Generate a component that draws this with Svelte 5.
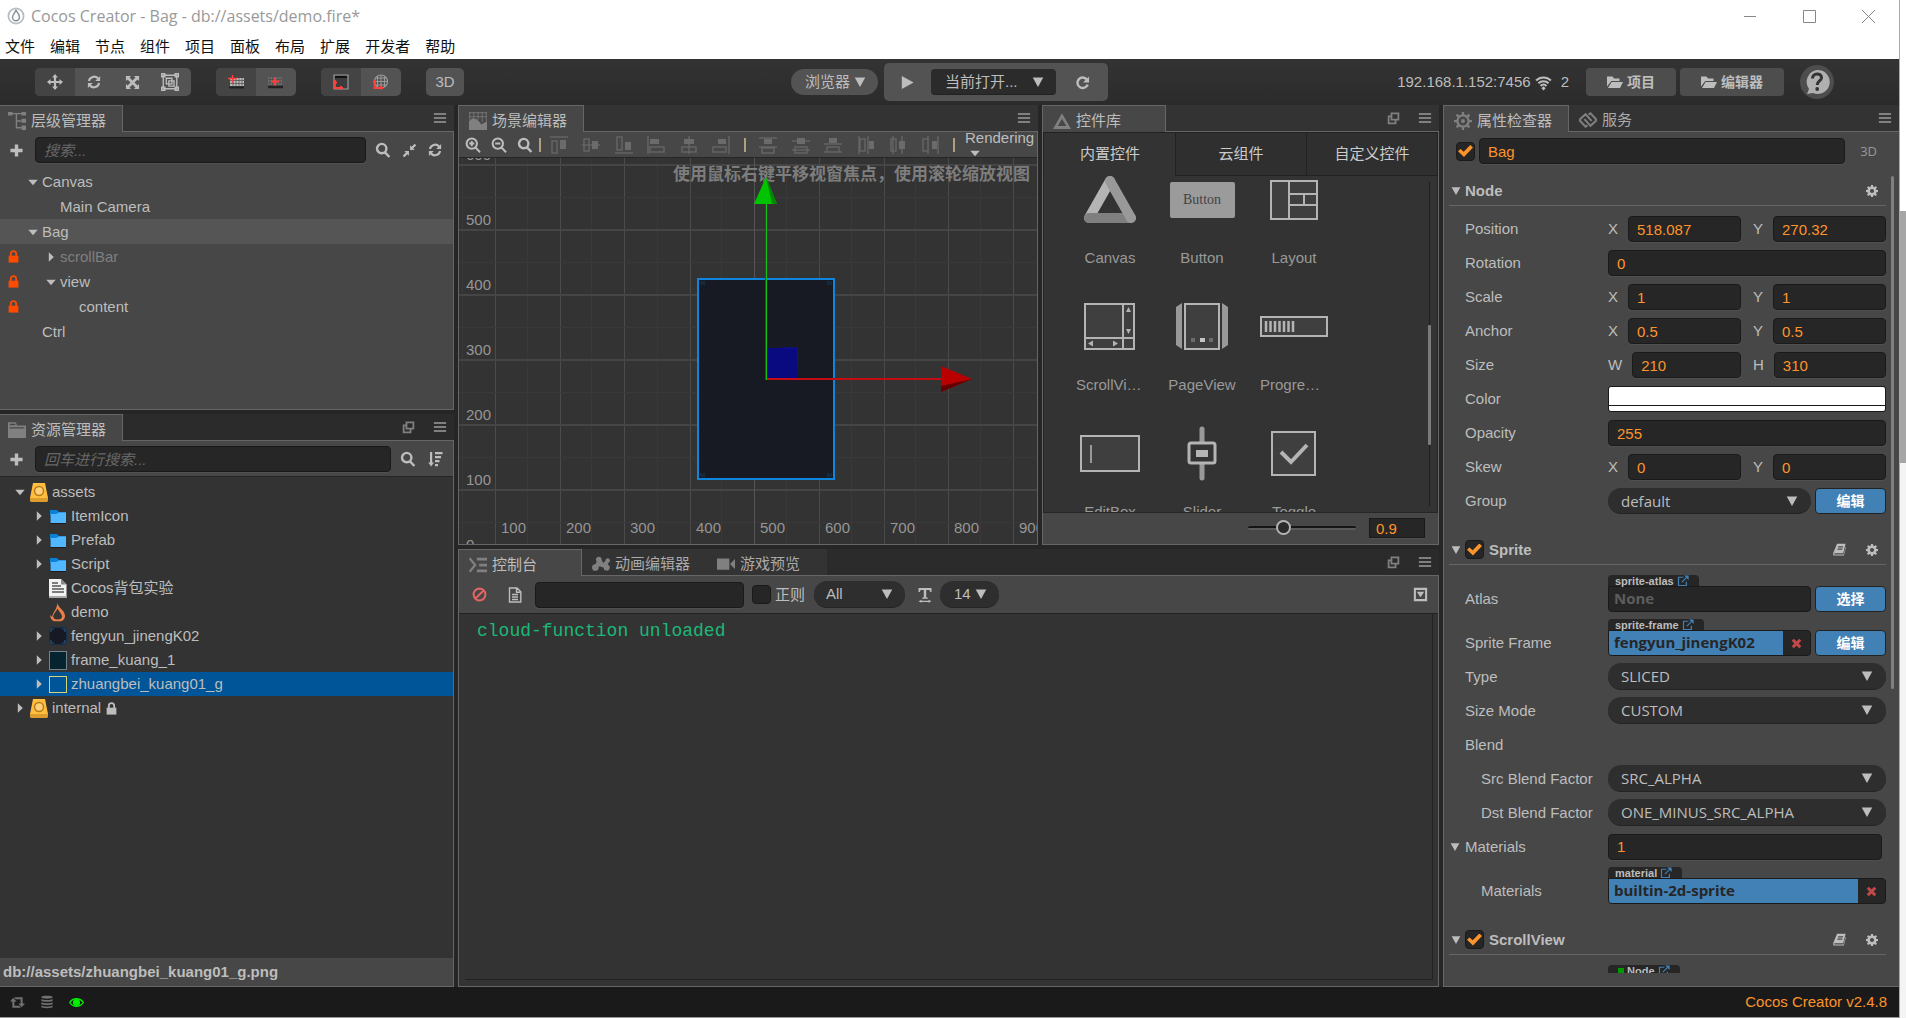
<script>
  // 16x16 glyphs: f = filled path, s = stroked path, w = stroke width
  const glyphs = {
    move: { f: 'M8 0l3 3.5H9.1v3.4h3.4V5L16 8l-3.5 3V9.1H9.1v3.4H11L8 16l-3-3.5h1.9V9.1H3.5V11L0 8l3.5-3v1.9h3.4V3.5H5z' },
    sync: { f: 'M15 1.2v5.6H9.4zM1 14.8V9.2h5.6z', s: 'M2.2 6.8A6 6 0 0 1 12.6 4M13.8 9.2A6 6 0 0 1 3.4 12', w: 2.4 },
    expand: { f: 'M1 1h5.5L4.8 2.7 8 5.9l3.2-3.2L9.5 1H15v5.5l-1.700-1.7L10.1 8l3.2 3.2L15 9.5V15H9.5l1.7-1.7L8 10.1l-3.2 3.2L6.5 15H1V9.5l1.7 1.7L5.900 8 2.7 4.8 1 6.5z' },
    rect: { s: 'M2 2h12v12H2zM4.7 4.7h5v5h-5zM7 7h4.6v4.6H7zM.6.6h2.8v2.8H.6zM12.6.6h2.8v2.8h-2.8zM.6 12.6h2.8v2.8H.6zM12.6 12.6h2.8v2.8h-2.8z', w: 1.2 },
    plus: { f: 'M6.2 1.500h3.6v4.7h4.7v3.6H9.8v4.7H6.2V9.8H1.5V6.2h4.7z' },
    search: { s: 'M11.4 6.6a4.7 4.7 0 1 1-9.4 0 4.7 4.7 0 0 1 9.4 0zM10 10.4l4.4 4.6', w: 2.4 },
    zoomin: { s: 'M12 6.6a5.2 5.2 0 1 1-10.4 0 5.2 5.2 0 0 1 10.4 0zM10.400 10.400l4.600 4.800M4.200 6.600H9.400M6.800 4v5.200', w: 2 },
    zoomout: { s: 'M12 6.6a5.2 5.2 0 1 1-10.4 0 5.2 5.2 0 0 1 10.4 0zM10.400 10.400l4.600 4.800M4.200 6.600H9.400', w: 2 },
    compress: { f: 'M8.6 7.4V2.5l1.6 1.6L13.6.8l1.6 1.6-3.3 3.4 1.6 1.6zM7.4 8.6v4.9l-1.6-1.6-3.4 3.3-1.6-1.6 3.3-3.4-1.6-1.6z' },
    sort: { f: 'M3 1h2.2v10.5H7l-2.9 4-2.9-4H3zM8 1h7.5v2.2H8zM8 5h6v2.2H8zM8 9h4.5v2.2H8zM8 13h3v2.2H8z' },
    menu: { f: 'M1 2.2h14v2.4H1zM1 6.8h14v2.4H1zM1 11.4h14v2.4H1z' },
    popup: { s: 'M5.5 1.8H14v7.5H5.5zM5.5 5.5H2V14h8.5V9.5', w: 2.2 },
    lock: { f: 'M2 7h12v8.500H2z', s: 'M4.700 8V4.6a3.300 3.300 0 0 1 6.600 0V8', w: 2.2 },
    down: { f: 'M.5 4.500h15L8 13z' },
    right: { f: 'M4.500.5v15l8-7.500z' },
    triangle: { f: 'M1 2h14L8 14.5z' },
    play: { f: 'M1 0l14.500 8L1 16z' },
    reload: { f: 'M15 1.5V8H8.5z', s: 'M12.6 4.8a5.6 5.6 0 1 0 .9 5.4', w: 2.6 },
    wifi: { f: 'M8 11.500l2 2L8 15.5l-2-2z', s: 'M1 6.2a10 10 0 0 1 14 0M3.200 8.800a6.800 6.800 0 0 1 9.600 0M5.2 11.200a4 4 0 0 1 5.600 0', w: 2 },
    folder: { f: 'M0 12.5V2.5h5.5l1.5 2h5.5V7H4.3zM1 14l3.6-6H16l-3 6z' },
    gear: { f: 'M6.7 0h2.600l.4 2.200 1.400.600L13 1.500 14.700 3.300 13.300 5.100l.6 1.400L16 6.800v2.500l-2.100.4-.6 1.400 1.300 1.800-1.800 1.800-1.800-1.300-1.400.6L9.300 16H6.700l-.4-2-1.400-.6-1.800 1.300-1.800-1.800 1.300-1.800L2.100 9.700 0 9.300V6.800l2.100-.4.6-1.300L1.300 3.300l1.800-1.800 1.800 1.300 1.400-.6zM8 5.300a2.700 2.700 0 1 0 0 5.400 2.700 2.700 0 0 0 0-5.400z' },
    geartab: { f: 'M8 6.3a1.7 1.7 0 1 0 0 3.4 1.7 1.7 0 0 0 0-3.4z', s: 'M13 8A5 5 0 1 1 3 8a5 5 0 0 1 10 0zM8 0v3M8 13v3M0 8h3M13 8h3M2.3 2.3l2 2M11.7 11.7l2 2M2.3 13.7l2-2M11.7 4.3l2-2', w: 2 },
    book: { f: 'M5 1h10.5L12.5 12.5H2.2C1 12.5 1 14 2.3 14H13l2.5-9.5.5.5-2.6 10.5H2C.3 15.5-.2 14 .4 12zM6.500 4l-.4 1.400h6L12.500 4zM5.700 6.800l-.4 1.400h6l.4-1.400z' },
    external: { s: 'M8.5 3H2v11h10.5V9M6.5 9.5L13.5 2.5', w: 1.6, f: 'M9.5.5h6v6z' },
    cross: { f: 'M1 4l3-3 4 3.8L12 1l3 3-3.800 4L15 12l-3 3-4-3.8L4 15l-3-3 3.8-4z' },
    ban: { s: 'M14.3 8A6.3 6.3 0 1 1 1.7 8a6.3 6.3 0 0 1 12.6 0zM12.3 3.7l-8.6 8.6', w: 2.2 },
    doc: { s: 'M2.5 1H10l3.8 3.8V15H2.5zM9.5 1v4.3h4M5 7.5h6M5 10h6M5 12.5h6', w: 1.400 },
    font: { f: 'M1.5 1h13v4h-1.3l-.8-2H9.2v7.3l1.6.5v1H5.2v-1l1.6-.5V3H3.6l-.8 2H1.5zM4.5 12.8v.9h7v-.9l3 1.5-3 1.5v-.9h-7v.9l-3-1.5z' },
    collapse: { s: 'M2 2h12v12H2z', f: 'M4 5h8l-4 6z', w: 2.2 },
    retweet: { f: 'M3.5 3L7 7H4.7v4.5H10l1.5 2h-9V7H0zM12.5 13L9 9h2.300V4.500H6l-1.500-2h9V9H16z' },
    database: { f: 'M1.5 2.5c0-2.200 13-2.200 13 0s-13 2.200-13 0zM1.5 4.600c2 1.600 11 1.600 13 0v1.600c0 2.200-13 2.200-13 0zM1.500 8.300c2 1.600 11 1.600 13 0v1.600c0 2.200-13 2.200-13 0zM1.500 12c2 1.600 11 1.600 13 0v1.400c0 2.200-13 2.200-13 0z' },
    eye: { s: 'M.8 8C4 2.6 12 2.6 15.2 8 12 13.4 4 13.4.8 8z', f: 'M8 4.2a3.8 3.8 0 1 0 0 7.6 3.8 3.8 0 0 0 0-7.6z', w: 1.5 },
    tree: { f: 'M0 0h4v3H0zM12 0h4v3h-4zM12 6h4v3.5h-4zM12 12h4v4h-4z', s: 'M3 1.5h10M7.5 1.5V14H12M7.5 8H12', w: 1.2 },
    scene: { f: 'M0 16V8l3-2.5L6 6l3 2.5 2 2.500 2-1 3-2v8z', s: 'M0 .7h16M0 4.2h16M.7 0v7M4.3 0v5M8 0v7M11.7 0v9M15.3 0v8', w: 0.7 },
    assets: { f: 'M0 1h7l1 3h8v11H0zM1.5 5.5v1.2h13V5.5zM1.5 2.5v1.3h5V2.5z' },
    console: { f: 'M7 1.5h9V4H7zM9 6.8h7v2.5H9zM7 12h9v2.5H7z', s: 'M.5 2l5 6-5 6', w: 2 },
    anim: { f: 'M6 1.500a2.500 2.500 0 0 1 2.500 2.800L10 7l2-1.800a2 2 0 1 1 2.500 1.600l-.3 1.800A2.800 2.800 0 1 1 10.200 11L7 10.300l-1.200.2A2.900 2.900 0 1 1 3 8.200l1.200-2.400A2.500 2.500 0 0 1 6 1.500z' },
    video: { f: 'M0 3h11v10H0zM12 7.5l4-4v9l-4-4z' },
    canvas: { f: 'M8 1l8 14H0zM8 6l-3.8 6.5h7.6z' },
    service: { s: 'M7.500 12.800L5.800 14 .9 8.700a1 1 0 0 1 0-1.400L5.800 2.800l5.400 6M8.500 3.200L10.200 2l4.900 5.300a1 1 0 0 1 0 1.400l-4.900 4.500-5.400-6', w: 1.8 },
  };

  // scene alignment glyphs on a 20x18 grid: o = outlines, b = solid blocks
  const aligns = [
    { o: 'M1 1h18M3 5h5v12H3z', b: 'M11 4h6v9h-6z' },
    { o: 'M1 9h18M3 3h5v12H3z', b: 'M11 5h6v8h-6z' },
    { o: 'M1 17h18M3 1h5v13H3z', b: 'M11 6h6v8h-6z' },
    { o: 'M2 0v18M4 11h14v5H4z', b: 'M4 3h9v5H4z' },
    { o: 'M10 0v18M3 11h14v5H3z', b: 'M5 3h10v5H5z' },
    { o: 'M18 0v18M2 11h13v5H2z', b: 'M7 3h8v5H7z' },
    null,
    { o: 'M1 2h18M1 11h18M4 12h12v5H4z', b: 'M6 3h8v5H6z' },
    { o: 'M1 5h18M1 14h18M4 11h12v6H4z', b: 'M6 2h8v6H6z' },
    { o: 'M1 8h18M1 16h18M4 11h12v5H4z', b: 'M6 2h8v5H6z' },
    { o: 'M3 0v18M4 3h5v12H4zM12 0v18', b: 'M13 5h5v8h-5z' },
    { o: 'M5 0v18M3 3h5v12H3zM14 0v18', b: 'M11 5h6v8h-6z' },
    { o: 'M8 0v18M3 3h5v12H3zM18 0v18', b: 'M12 5h5v8h-5z' },
    null,
  ];

  const menus = ['文件', '编辑', '节点', '组件', '项目', '面板', '布局', '扩展', '开发者', '帮助'];
  const nodes = [
    { name: 'Canvas', depth: 0, arrow: 'down' },
    { name: 'Main Camera', depth: 1 },
    { name: 'Bag', depth: 0, arrow: 'down', active: true },
    { name: 'scrollBar', depth: 1, arrow: 'right', lock: true, dim: true },
    { name: 'view', depth: 1, arrow: 'down', lock: true },
    { name: 'content', depth: 2, lock: true },
    { name: 'Ctrl', depth: 0 },
  ];
  const files = [
    { name: 'assets', depth: 0, arrow: 'down', kind: 'db' },
    { name: 'ItemIcon', depth: 1, arrow: 'right', kind: 'folder' },
    { name: 'Prefab', depth: 1, arrow: 'right', kind: 'folder' },
    { name: 'Script', depth: 1, arrow: 'right', kind: 'folder' },
    { name: 'Cocos背包实验', depth: 1, kind: 'text' },
    { name: 'demo', depth: 1, kind: 'fire' },
    { name: 'fengyun_jinengK02', depth: 1, arrow: 'right', kind: 'tex1' },
    { name: 'frame_kuang_1', depth: 1, arrow: 'right', kind: 'tex2' },
    { name: 'zhuangbei_kuang01_g', depth: 1, arrow: 'right', kind: 'tex3', active: true },
    { name: 'internal', depth: 0, arrow: 'right', kind: 'db', lock: true },
  ];
  const widgets = [
    { kind: 'Canvas', label: 'Canvas' },
    { kind: 'Button', label: 'Button' },
    { kind: 'Layout', label: 'Layout' },
    { kind: 'ScrollView', label: 'ScrollVi…', cut: true },
    { kind: 'PageView', label: 'PageView' },
    { kind: 'ProgressBar', label: 'Progre…', cut: true },
    { kind: 'EditBox', label: 'EditBox' },
    { kind: 'Slider', label: 'Slider' },
    { kind: 'Toggle', label: 'Toggle' },
  ];
  const vlines = [36, 101, 165, 231, 295, 360, 425, 489, 554];
  const hlines = [7, 72, 137, 202, 267, 332];
</script>

{#snippet icon(name, size = 16)}
  <svg width={size} height={size} viewBox="0 0 16 16" aria-hidden="true">
    {#if glyphs[name].f}<path d={glyphs[name].f} fill="currentColor" fill-rule="evenodd" />{/if}
    {#if glyphs[name].s}<path d={glyphs[name].s} fill="none" stroke="currentColor" stroke-width={glyphs[name].w} />{/if}
  </svg>
{/snippet}

{#snippet tab(ic, label, active)}
  <button class="tab" class:active role="tab" aria-selected={active}>{@render icon(ic, 18)}<span>{label}</span></button>
{/snippet}

{#snippet panelTools(popup)}
  <div class="panel-tools">
    {#if popup}<button aria-label="弹出">{@render icon('popup', 13)}</button>{/if}
    <button aria-label="菜单">{@render icon('menu', 14)}</button>
  </div>
{/snippet}

{#snippet dropdown(value, label)}
  <div class="drop">
    <select aria-label={label}><option>{value}</option></select>
    {@render icon('triangle', 12)}
  </div>
{/snippet}

{#snippet pair(label, a, av, b, bv)}
  <div class="prop">
    <span class="name">{label}</span>
    <div class="value pair">
      <label>{a}<input value={av} /></label>
      <label>{b}<input value={bv} /></label>
    </div>
  </div>
{/snippet}

{#snippet single(label, value)}
  <label class="prop"><span class="name">{label}</span><input class="value" {value} /></label>
{/snippet}

{#snippet choose(label, value, sub)}
  <div class="prop"><span class="name" class:sub>{label}</span><div class="value">{@render dropdown(value, label)}</div></div>
{/snippet}

{#snippet header(title)}
  <div class="sec-head">
    {@render icon('triangle', 10)}
    <label><input type="checkbox" checked /><b>{title}</b></label>
    <div class="sec-tools">
      <button aria-label="文档">{@render icon('book', 13)}</button>
      <button aria-label="设置">{@render icon('gear', 12)}</button>
    </div>
  </div>
{/snippet}

<div class="window">
  <header class="titlebar">
    <svg width="18" height="18" viewBox="0 0 18 18" aria-hidden="true">
      <circle cx="9" cy="9" r="7.6" fill="#fff" stroke="#b9bdc4" stroke-width="1.8" />
      <path d="M9 2.5c.5 3 3.5 4.5 3.5 7.8a3.5 3.5 0 0 1-7 0C5.5 7.5 8.5 6 9 2.5z" fill="#fff" stroke="#868b92" stroke-width="1.4" />
    </svg>
    <h1>Cocos Creator - Bag - db://assets/demo.fire*</h1>
    <div class="win-ctl">
      <button aria-label="最小化"><svg width="13" height="13"><path d="M0 6.5h12" /></svg></button>
      <button aria-label="最大化"><svg width="13" height="13"><path d="M.5.5h12v12H.5z" /></svg></button>
      <button aria-label="关闭"><svg width="13" height="13"><path d="M0 0l13 13M13 0L0 13" /></svg></button>
    </div>
  </header>
  <nav class="menubar">{#each menus as m}<button>{m}</button>{/each}</nav>

  <div class="toolbar">
    <div class="tb-left">
      <div class="seg">
        <button class="on" aria-label="移动">{@render icon('move', 16)}</button>
        <button aria-label="旋转">{@render icon('sync', 14)}</button>
        <button aria-label="缩放">{@render icon('expand', 15)}</button>
        <button aria-label="矩形">{@render icon('rect', 18)}</button>
      </div>
      <div class="seg">
        <button class="on" aria-label="锚点"><svg width="16" height="16" viewBox="0 0 16 16"><path d="M2 4h14v8H2z" fill="#bbb" /><path d="M5 4v8M8 4v8M11 4v8M14 4v8M2 6.5h14M2 9.5h14" stroke="#4b4b4b" stroke-width=".7" /><path d="M1 13.500h15" stroke="#222" stroke-width="2" /><path d="M0 4.5h9M4.500 1v8" stroke="#ff4040" stroke-width="1.4" /></svg></button>
        <button aria-label="中心"><svg width="16" height="16" viewBox="0 0 16 16"><path d="M1 4h15M1 7h15M1 10h15" stroke="#888" stroke-width="1.200" stroke-dasharray="1.500 1" /><path d="M1 13h15" stroke="#222" stroke-width="2.500" /><path d="M4 7.500h8M8 3.500v8" stroke="#ff4040" stroke-width="1.800" /></svg></button>
      </div>
      <div class="seg">
        <button class="on" aria-label="本地"><svg width="16" height="16" viewBox="0 0 16 16"><path d="M1 1h14v14H1z" fill="#3c3c3c" stroke="#999" stroke-width="1.2" /><path d="M2 2h12v2H2z" fill="#111" /><path d="M2 6v8h8M1 8.500h3M8 12v3.500" stroke="#ff4040" stroke-width="1.800" fill="none" /></svg></button>
        <button aria-label="世界"><svg width="16" height="16" viewBox="0 0 16 16"><circle cx="9" cy="7.5" r="6.5" fill="none" stroke="#999" stroke-width="1.2" /><path d="M9 1v13M5.5 2v11M12.5 2v11M2.5 7.500h13M3.500 4h11M3.500 11h11" stroke="#999" /><path d="M2.500 6v8H11M1 8h3M9 11.500v4" stroke="#ff4040" stroke-width="1.800" fill="none" /></svg></button>
      </div>
      <button class="btn3d">3D</button>
    </div>
    <div class="tb-mid">
      <div class="browser"><select aria-label="预览平台"><option>浏览器</option></select>{@render icon('triangle', 12)}</div>
      <div class="playbox">
        <button class="run" aria-label="运行">{@render icon('play', 13)}</button>
        <div class="scene-select"><select aria-label="场景"><option>当前打开...</option></select>{@render icon('triangle', 12)}</div>
        <button aria-label="刷新">{@render icon('reload', 15)}</button>
      </div>
    </div>
    <div class="tb-right">
      <span class="ip">192.168.1.152:7456</span>{@render icon('wifi', 17)}<span class="count">2</span>
      <button class="open">{@render icon('folder', 16)}项目</button>
      <button class="open">{@render icon('folder', 16)}编辑器</button>
      <button class="help" aria-label="帮助">
        <svg width="34" height="34" viewBox="0 0 34 34"><circle cx="17" cy="17" r="17" fill="#4d4d4d" /><path d="M17 5a12 12 0 1 1-4 23l-6 1 2-5A12 12 0 0 1 17 5z" fill="#b0b0b0" /><path d="M12.5 13.5c0-6 9-6 9-.8 0 3.3-4.3 3.3-4.3 7.3" fill="none" stroke="#333" stroke-width="3" /><circle cx="17.2" cy="24" r="1.9" fill="#333" /></svg>
      </button>
    </div>
  </div>

  <main>
    <div class="col left">
      <section class="panel hierarchy">
        <div class="tabs">{@render tab('tree', '层级管理器', true)}{@render panelTools(false)}</div>
        <div class="body">
          <div class="searchbar">
            <button aria-label="新建">{@render icon('plus', 15)}</button>
            <input placeholder="搜索..." aria-label="搜索节点" />
            <button aria-label="搜索">{@render icon('search', 16)}</button>
            <button aria-label="折叠">{@render icon('compress', 15)}</button>
            <button aria-label="刷新">{@render icon('sync', 14)}</button>
          </div>
          <ul class="nodes">
            {#each nodes as n}
              <li class:active={n.active} class:dim={n.dim} class="d{n.depth}">
                <span class="lock">{#if n.lock}{@render icon('lock', 13)}{/if}</span>
                <span class="arrow">{#if n.arrow}{@render icon(n.arrow, 10)}{/if}</span>
                <span>{n.name}</span>
              </li>
            {/each}
          </ul>
        </div>
      </section>

      <section class="panel assets">
        <div class="tabs">{@render tab('assets', '资源管理器', true)}{@render panelTools(true)}</div>
        <div class="body">
          <div class="searchbar two">
            <button aria-label="新建">{@render icon('plus', 15)}</button>
            <input placeholder="回车进行搜索..." aria-label="搜索资源" />
            <button aria-label="搜索">{@render icon('search', 16)}</button>
            <button aria-label="排序">{@render icon('sort', 16)}</button>
          </div>
          <ul class="files">
            {#each files as f}
              <li class:active={f.active} class="d{f.depth}">
                <span class="arrow">{#if f.arrow}{@render icon(f.arrow, 10)}{/if}</span>
                <svg width="18" height="20" viewBox="0 0 18 20" aria-hidden="true">
                  {#if f.kind === 'db'}
                    <path d="M3 1h12l3 15v2l-1 2H1l-1-2v-2z" fill="#ffbe3d" /><path d="M0 16h18v2l-1 2H1l-1-2z" fill="#dc9c2e" /><circle cx="9" cy="9" r="4.5" fill="#ffd27a" stroke="#b97a1c" stroke-width="1.5" />
                  {:else if f.kind === 'folder'}
                    <path d="M1 4h7l2 2h7v12H1z" fill="#1c1c1c" /><path d="M1 4h7l2 2h7v3H1z" fill="#0b81d6" /><path d="M1.5 8h6l2-1.5H17V17H1.5z" fill="#51b7ff" />
                  {:else if f.kind === 'text'}
                    <path d="M0 1h12l5.5 5.5V20H0z" fill="#f2f2f2" /><path d="M12 1l5.5 5.5H12z" fill="#888" /><path d="M3 5h6M3 8h9M3 11h12M3 14h12" stroke="#555" stroke-width="1.4" /><path d="M0 18h17.5v2H0z" fill="#aaa" />
                  {:else if f.kind === 'fire'}
                    <path d="M8.5 1C9 6 16 8 16 14c0 3-2.5 5.2-4 5.2H5.5C3.5 19 1 16.5 1.2 13L3 15C4.5 9 7.5 8 8.5 1z" fill="#e8804a" /><path d="M8.5 6.500c1 3 4.500 5 4.500 8 0 1.700-1.500 3-4.500 3s-4.200-1.300-4.200-3c0-3 3.200-5 4.200-8z" fill="#333" />
                  {:else if f.kind === 'tex1'}
                    <rect x=".5" y="1.5" width="17" height="17" rx="3" fill="#171a24" stroke="#11304a" /><path d="M2 6V3h3M13 3h3v3M2 14v3h3M13 17h3v-3" fill="none" stroke="#2a5578" stroke-width="1.2" />
                  {:else if f.kind === 'tex2'}
                    <rect x=".5" y="1.5" width="17" height="18" fill="#052430" stroke="#72838c" />
                  {:else}
                    <rect x=".5" y="2.5" width="17" height="16" fill="none" stroke="#d5d27a" />
                  {/if}
                </svg>
                <span>{f.name}</span>
                {#if f.lock}{@render icon('lock', 13)}{/if}
              </li>
            {/each}
          </ul>
          <div class="path">db://assets/zhuangbei_kuang01_g.png</div>
        </div>
      </section>
    </div>

    <div class="col mid">
      <div class="midtop">
        <section class="panel scene">
          <div class="tabs">{@render tab('scene', '场景编辑器', true)}{@render panelTools(false)}</div>
          <div class="body">
            <div class="scene-tools">
              <button aria-label="放大">{@render icon('zoomin', 16)}</button>
              <button aria-label="缩小">{@render icon('zoomout', 16)}</button>
              <button aria-label="适应">{@render icon('search', 16)}</button>
              <i class="bar"></i>
              <div class="aligns">
                {#each aligns as a}
                  {#if a}
                    <button aria-label="对齐"><svg width="20" height="18" viewBox="0 0 20 18"><path d={a.o} fill="none" stroke="#646464" stroke-width="1.5" /><path d={a.b} fill="#6b6b6b" /></svg></button>
                  {:else}<i class="bar"></i>{/if}
                {/each}
              </div>
              <button class="rendering"><span>Rendering</span>{@render icon('down', 10)}</button>
            </div>
            <svg class="canvas" role="img" aria-label="场景">
              {#each vlines as x}
                <rect {x} y="0" width="1" height="100%" fill="#4b4b4b" /><rect x={x - 33} y="0" width="1" height="100%" fill="#393939" />
              {/each}
              {#each hlines as y}
                <rect x="0" y={y - 1} width="100%" height="2" fill="#454545" /><rect x="0" y={y + 32} width="100%" height="1" fill="#393939" />
              {/each}
              <rect x="295" y="0" width="1" height="100%" fill="#555" />
              <text class="tip" x="571" y="22" text-anchor="end">使用鼠标右键平移视窗焦点，使用滚轮缩放视图</text>
              <text x="7" y="2">600</text>
              {#each [500, 400, 300, 200, 100, 0] as v, i}<text x="7" y={67 + i * 65}>{v}</text>{/each}
              {#each vlines as x, i}<text x={x + 6} y="375">{(i + 1) * 100}</text>{/each}
              <rect x="239" y="121" width="136" height="200" fill="#171a22" stroke="#0f86dd" stroke-width="2" />
              <path d="M242 127v-3h4M372 127v-3h-4M242 315v3h4M372 315v3h-4M244 126h2M370 126h-2M244 316h2M370 316h-2" fill="none" stroke="#163a58" stroke-width="1" />
              <rect x="308" y="190" width="31" height="31" fill="#0a0a80" />
              <path d="M323 190h15.5v18" fill="none" stroke="#0d0dab" stroke-width="1" />
              <rect x="306" y="45" width="1" height="177" fill="#12600f" /><rect x="307" y="45" width="1" height="177" fill="#13c413" />
              <path d="M307 19l11 27h-23z" fill="#00c400" /><path d="M307 19l11 27h-5z" fill="#008800" />
              <rect x="308" y="220" width="174" height="2" fill="#c40d12" />
              <path d="M482 208l31 13-31 13z" fill="#b80000" /><path d="M482 228l31-7-31 13z" fill="#650000" />
            </svg>
          </div>
        </section>

        <section class="panel library">
          <div class="tabs">{@render tab('canvas', '控件库', true)}{@render panelTools(true)}</div>
          <div class="body">
            <div class="subtabs" role="tablist">
              <button role="tab" aria-selected="true">内置控件</button>
              <button role="tab" aria-selected="false">云组件</button>
              <button role="tab" aria-selected="false">自定义控件</button>
            </div>
            <div class="lib-scroll">
              <div class="widgets">
                {#each widgets as w}
                  <figure>
                    {#if w.kind === 'Button'}
                      <div class="pic"><span class="fake-btn">Button</span></div>
                    {:else}
                      <svg class="pic" width="68" height="56" viewBox="0 0 68 56" fill="none" stroke="#b4b4b4" stroke-width="2" aria-hidden="true">
                        {#if w.kind === 'Canvas'}
                          <path d="M13 46L34 9" stroke-width="10" stroke-linecap="round" /><path d="M13 46h42" stroke="#7f7f7f" stroke-width="10" stroke-linecap="round" /><path d="M34 9l21 37" stroke="#999" stroke-width="10" stroke-linecap="round" />
                        {:else if w.kind === 'Layout'}
                          <path fill="#3f3f3f" d="M11 9h46v38H11zM29 9v38M29 22h28M29 33h28M44 22v11" />
                        {:else if w.kind === 'ScrollView'}
                          <path fill="#3f3f3f" d="M9 5h49v45H9zM47 5v45M9 39h49" /><path d="M50 13l2.500-5 2.500 5zM50 30l2.500 5 2.500-5zM17 41.500l-5 3 5 3zM37 41.500l5 3-5 3z" fill="#b4b4b4" stroke="none" />
                        {:else if w.kind === 'PageView'}
                          <path d="M8 8l6-4v46l-6-4zM60 8l-6-4v46l6-4z" fill="#999" stroke="none" /><path fill="#3f3f3f" d="M17 5h34v45H17z" /><path d="M23 39h4v4h-4zM41 39h4v4h-4z" fill="#6b6b6b" stroke="none" /><path d="M32 39h5v4h-5z" fill="#c4c4c4" stroke="none" />
                        {:else if w.kind === 'ProgressBar'}
                          <path fill="#3f3f3f" d="M1 18h66v19H1z" /><path d="M6 22v11M10.500 22v11M15 22v11M19.500 22v11M24 22v11M28.500 22v11M33 22v11" stroke-width="2.500" />
                        {:else if w.kind === 'EditBox'}
                          <path fill="#3f3f3f" d="M5 10h58v35H5z" /><path d="M15 19v18" stroke="#999" />
                        {:else if w.kind === 'Slider'}
                          <path d="M34 3v49" stroke="#999" stroke-width="5" stroke-linecap="round" /><rect x="21" y="17" width="26" height="20" rx="2" fill="#333" stroke-width="3" /><path d="M28 24h12v7H28z" fill="#b4b4b4" stroke="none" />
                        {:else}
                          <path fill="#3f3f3f" d="M12 6h43v43H12z" /><path d="M21 26l10 10L47 19" stroke-width="4" />
                        {/if}
                      </svg>
                    {/if}
                    <figcaption class:cut={w.cut}>{w.label}</figcaption>
                  </figure>
                {/each}
              </div>
              <div class="lib-bar"><i></i></div>
            </div>
            <div class="lib-foot">
              <input type="range" min="0" max="3" step="0.1" value="0.9" aria-label="图标大小" />
              <input class="num" value="0.9" aria-label="缩放值" />
            </div>
          </div>
        </section>
      </div>

      <section class="panel console">
        <div class="tabs">
          {@render tab('console', '控制台', true)}
          {@render tab('anim', '动画编辑器', false)}
          {@render tab('video', '游戏预览', false)}
          {@render panelTools(true)}
        </div>
        <div class="body">
          <div class="con-tools">
            <button class="ban" aria-label="清空">{@render icon('ban', 15)}</button>
            <button class="doc" aria-label="日志">{@render icon('doc', 16)}</button>
            <input class="filter" aria-label="过滤" />
            <label class="regex"><input type="checkbox" />正则</label>
            <div class="pill all"><select aria-label="级别"><option>All</option></select>{@render icon('triangle', 12)}</div>
            <span class="fonticon">{@render icon('font', 16)}</span>
            <div class="pill size"><select aria-label="字号"><option>14</option></select>{@render icon('triangle', 12)}</div>
            <button class="coll" aria-label="折叠">{@render icon('collapse', 15)}</button>
          </div>
          <div class="log"><p>cloud-function unloaded</p></div>
        </div>
      </section>
    </div>

    <section class="panel inspector">
      <div class="tabs">{@render tab('geartab', '属性检查器', true)}{@render tab('service', '服务', false)}{@render panelTools(false)}</div>
      <div class="body">
        <div class="node-name">
          <input type="checkbox" checked aria-label="启用" /><input value="Bag" aria-label="节点名" /><button>3D</button>
        </div>
        <div class="ins-scroll">
          <div class="sections">
            <div class="sec node-sec">
              <div class="sec-head">
                {@render icon('triangle', 10)}<b>Node</b>
                <div class="sec-tools"><button aria-label="设置">{@render icon('gear', 12)}</button></div>
              </div>
              <div class="props">
                {@render pair('Position', 'X', '518.087', 'Y', '270.32')}
                {@render single('Rotation', '0')}
                {@render pair('Scale', 'X', '1', 'Y', '1')}
                {@render pair('Anchor', 'X', '0.5', 'Y', '0.5')}
                {@render pair('Size', 'W', '210', 'H', '310')}
                <div class="prop"><span class="name">Color</span><button class="value color" aria-label="Color"></button></div>
                {@render single('Opacity', '255')}
                {@render pair('Skew', 'X', '0', 'Y', '0')}
                <div class="prop"><span class="name">Group</span><div class="value row">{@render dropdown('default', 'Group')}<button class="blue">编辑</button></div></div>
              </div>
            </div>
            <div class="sec">
              {@render header('Sprite')}
              <div class="props sprite">
                <div class="prop tall">
                  <span class="name">Atlas</span>
                  <div class="value row asset"><div class="slot"><span class="tag">sprite-atlas{@render icon('external', 12)}</span><div class="ref none">None</div></div><button class="blue">选择</button></div>
                </div>
                <div class="prop tall">
                  <span class="name">Sprite Frame</span>
                  <div class="value row asset"><div class="slot"><span class="tag">sprite-frame{@render icon('external', 12)}</span><div class="ref"><span>fengyun_jinengK02</span><button aria-label="移除">{@render icon('cross', 11)}</button></div></div><button class="blue">编辑</button></div>
                </div>
                {@render choose('Type', 'SLICED', false)}
                {@render choose('Size Mode', 'CUSTOM', false)}
                <div class="prop"><span class="name">Blend</span></div>
                {@render choose('Src Blend Factor', 'SRC_ALPHA', true)}
                {@render choose('Dst Blend Factor', 'ONE_MINUS_SRC_ALPHA', true)}
                <label class="prop mats"><span class="name">{@render icon('triangle', 10)}Materials</span><input class="value" value="1" /></label>
                <div class="prop tall">
                  <span class="name sub">Materials</span>
                  <div class="value row asset"><div class="slot"><span class="tag">material{@render icon('external', 12)}</span><div class="ref"><span>builtin-2d-sprite</span><button aria-label="移除">{@render icon('cross', 11)}</button></div></div></div>
                </div>
              </div>
            </div>
            <div class="sec">
              {@render header('ScrollView')}
              <div class="props sprite"><div class="prop tall"><span class="name"></span><div class="value row asset"><div class="slot"><span class="tag"><i class="dot"></i>Node{@render icon('external', 12)}</span><div class="ref none"></div></div></div></div></div>
            </div>
          </div>
          <div class="ins-bar"></div>
        </div>
      </div>
    </section>
  </main>

  <footer>
    {@render icon('retweet', 15)}{@render icon('database', 14)}<span class="eye">{@render icon('eye', 15)}</span>
    <span class="version">Cocos Creator v2.4.8</span>
  </footer>
</div>
<aside class="behind"></aside>

<style>
  :global(body) { background: #fff; }
  :global(#app) {
    display: flex; height: 100vh; overflow: hidden;
    font: 15px/18px "Liberation Sans", "Noto Sans CJK SC", sans-serif; color: #bdbdbd;
  }
  * { box-sizing: border-box; }
  button, input, select { font: inherit; color: inherit; margin: 0; padding: 0; border: 0; background: none; min-width: 0; }
  button { display: inline-flex; align-items: center; justify-content: center; }
  select { appearance: none; outline: 0; }
  svg { display: block; flex: none; }
  ul { list-style: none; margin: 0; padding: 0; }

  .window { flex: 1; min-width: 0; display: flex; flex-direction: column; background: #262626; border-bottom: 1px solid #999; }
  .behind { width: 7px; background: linear-gradient(#fff 0 211px, #a6a6a6 211px 463px, #f4f4f4 463px); border-left: 1px solid #aaa; }

  .titlebar { display: flex; align-items: center; height: 32px; padding-left: 7px; background: #fff; }
  h1 { margin: 0 0 0 6px; font: 16px/20px "Open Sans", sans-serif; color: #999; flex: 1; }
  .win-ctl { display: flex; gap: 46px; padding-right: 24px; }
  .win-ctl path { fill: none; stroke: #888; }
  .menubar { display: flex; gap: 15px; height: 27px; padding: 2px 5px 0; background: #fff; color: #111; }

  .toolbar { display: grid; grid-template-columns: 1fr auto 1fr; align-items: center; height: 46px; background: linear-gradient(#333, #2b2b2b); }
  .tb-left { display: flex; gap: 25px; padding-left: 35px; }
  .seg { display: flex; height: 28px; padding-right: 2px; border-radius: 5px; background: #535353; overflow: hidden; }
  .seg button { width: 38px; }
  .seg .on { width: 40px; background: #444; }
  .btn3d { width: 38px; border-radius: 5px; background: #535353; }
  .tb-mid { display: flex; align-items: center; gap: 6px; }
  .browser, .scene-select, .drop, .pill { display: grid; align-items: center; }
  .browser > :global(*), .scene-select > :global(*), .drop > :global(*), .pill > :global(*) { grid-area: 1 / 1; }
  .browser :global(svg), .scene-select :global(svg), .drop :global(svg), .pill :global(svg) { justify-self: end; pointer-events: none; }
  .browser { width: 87px; height: 26px; padding: 0 12px 0 14px; border-radius: 13px; background: #535353; }
  .playbox { display: flex; width: 224px; height: 38px; align-items: center; border-radius: 5px; background: #535353; }
  .playbox > button { flex: 1; height: 38px; }
  .playbox > .run { flex: 0 0 47px; }
  .scene-select { width: 125px; height: 26px; padding: 0 12px 0 14px; border-radius: 4px; background: #2b2b2b; border-bottom: 1px solid #222; }
  .tb-right { display: flex; align-items: center; justify-content: flex-end; padding-right: 65px; }
  .ip { margin-right: 4px; }
  .count { margin: 0 17px 0 9px; }
  .open { height: 28px; padding: 0 21px; gap: 4px; margin-right: 4px; border-radius: 4px; background: #4d4d4d; font-weight: bold; font-size: 14px; }
  .help { margin-left: 12px; }

  main { flex: 1; min-height: 0; display: grid; grid-template-columns: 454fr 981fr 456fr; gap: 4px; }
  .col { display: grid; gap: 4px; min-width: 0; min-height: 0; }
  .left { grid-template-rows: 305fr 573fr; }
  .mid { grid-template-rows: 440fr 438fr; }
  .midtop { display: grid; grid-template-columns: 580fr 397fr; gap: 4px; min-height: 0; }
  .panel { display: flex; flex-direction: column; min-width: 0; min-height: 0; }
  .body { flex: 1; min-height: 0; display: flex; flex-direction: column; background: #474747; border: 1px solid #666; border-top: 0; }
  .left .body { border-left: 0; }
  .inspector .body { border-right: 0; }
  .tabs { display: flex; height: 27px; background: #333; border-bottom: 1px solid #666; flex: none; }
  .console .tabs, .assets .tabs { background: #2b2b2b; }
  .tab { gap: 5px; height: 26px; padding: 3px 17px 0 10px; background: #333; color: #aaa; justify-content: flex-start; }
  .tab :global(svg) { color: #808080; }
  .tab.active { height: 27px; min-width: 124px; padding-right: 16px; background: #474747; color: #bdbdbd; border: 1px solid #666; border-bottom: 0; }
  .console .tab:last-of-type { padding-right: 27px; }
  .left .tab.active { border-left: 0; padding-left: 8px; min-width: 123px; }
  .panel-tools { margin-left: auto; display: flex; align-items: center; gap: 18px; padding-right: 7px; color: #808080; }

  input:not([type]) { height: 26px; padding: 0 8px; background: #262626; border: 1px solid #1a1a1a; border-radius: 4px; color: #fd942b; box-shadow: 0 1px #505050; outline: 0; }
  input::placeholder { color: #666; font-style: italic; }
  input[type='checkbox'] { appearance: none; width: 19px; height: 19px; background: #262626; border: 1px solid #1a1a1a; border-radius: 4px; display: grid; place-items: center; flex: none; }
  input[type='checkbox']:checked::before { content: ''; width: 15px; height: 12px; background: #fd942b; clip-path: polygon(0 52%, 17% 34%, 38% 57%, 82% 0, 100% 20%, 40% 100%); }

  .searchbar { display: flex; align-items: center; padding: 5px 11px 6px 9px; gap: 11px; }
  .searchbar input { flex: 1; }
  .searchbar input { margin-right: -2px; }
  .searchbar.two { padding: 5px 10px 4px 9px; border-bottom: 1px solid #262626; }
  li { display: flex; align-items: center; white-space: nowrap; }
  .arrow { width: 10px; }
  .nodes li { height: 25px; }
  .nodes .active { background: #555; }
  .nodes .lock { width: 28px; padding-left: 7px; color: #ff4b00; }
  .nodes .arrow { margin-right: 4px; }
  .nodes .d1 .arrow { margin-left: 18px; }
  .nodes .d2 .arrow { margin-left: 37px; }
  .nodes .dim span:last-child { color: #7f7f7f; }
  .files { flex: 1; padding-top: 3px; background: #333; }
  .files li { height: 24px; padding-left: 15px; gap: 4px; }
  .files .arrow { width: 11px; }
  .files li.d1 { padding-left: 34px; }
  .files .active { background: #059; }
  .path { height: 28px; padding: 5px 3px; font-weight: bold; }

  .scene-tools { display: flex; align-items: center; height: 26px; padding-left: 6px; border-bottom: 1px solid #262626; gap: 10px; }
  .bar { width: 2px; height: 14px; background: #b0a080; }
  .scene-tools > .bar { margin-left: -4px; }
  .aligns { flex: 1; display: flex; align-items: center; justify-content: space-between; margin-left: -2px; }
  .rendering { flex-direction: column; align-items: flex-start; justify-content: flex-start; gap: 4px; width: 72px; height: 26px; line-height: 12px; }
  .rendering :global(svg) { margin-left: 5px; }
  .canvas { flex: 1; width: 100%; min-height: 0; background: #333; }
  .canvas text { fill: #969696; font-size: 15px; }
  .canvas .tip { fill: #7d7d7d; font-size: 17px; font-weight: bold; }

  .subtabs { display: grid; grid-template-columns: repeat(3, 1fr); height: 44px; flex: none; background: #333; border: 1px solid #222; border-bottom: 0; }
  .subtabs button { background: #2f2f2f; border-left: 1px solid #222; border-bottom: 1px solid #222; color: #ccc; }
  .subtabs [aria-selected='true'] { background: #333; border-color: #333; }
  .lib-scroll { flex: 1; min-height: 0; overflow: hidden; display: flex; background: #333; border: 1px solid #262626; border-top: 0; padding: 0 6px 0 32px; }
  .widgets { flex: 1; display: grid; grid-template-columns: repeat(3, 68px); column-gap: 24px; align-content: start; grid-auto-rows: 127px; }
  figure { margin: 0; text-align: center; }
  .widgets .pic { height: 56px; margin: -4px 0 20px; }
  div.pic { display: grid; place-items: center; }
  .fake-btn { width: 65px; height: 36px; border-radius: 2px; background: #9b9b9b; color: #444; font: 14px/36px "Liberation Serif", serif; }
  figcaption { color: #999; line-height: 20px; white-space: nowrap; }
  .cut { text-align: left; }
  .lib-bar { width: 3px; margin: 6px 0; background: linear-gradient(90deg, transparent 1px, #1e1e1e 1px 2px, transparent 2px); padding-top: 143px; }
  .lib-bar i { display: block; height: 120px; background: #7b7b7b; border-radius: 1px; }
  .lib-foot { display: flex; justify-content: flex-end; align-items: center; height: 31px; padding: 0 13px 1px 0; gap: 13px; }
  .lib-foot .num { width: 56px; height: 20px; padding: 0 6px; border-radius: 0; }
  input[type='range'] { appearance: none; width: 108px; height: 16px; }
  input[type='range']::-webkit-slider-runnable-track { height: 4px; border-radius: 2px; background: linear-gradient(#151515 50%, #5a5a5a 50%); }
  input[type='range']::-webkit-slider-thumb { appearance: none; width: 15px; height: 15px; margin-top: -6px; border-radius: 50%; background: #2b2b2b; border: 2px solid #b5b5b5; }

  .con-tools { display: flex; align-items: center; height: 38px; padding: 0 10px 0 13px; border-bottom: 1px solid #222; flex: none; }
  .ban { color: #e06565; margin-right: 20px; }
  .doc { margin-right: 12px; }
  .con-tools input.filter { width: 209px; }
  .regex { display: flex; align-items: center; gap: 4px; margin: 0 9px 0 8px; }
  .pill, .drop { height: 27px; border-radius: 13px; background: #2e2e2e; border-bottom: 1px solid #242424; }
  .all { width: 91px; padding: 0 12px; }
  .fonticon { margin: 0 7px 0 12px; }
  .size { width: 59px; padding: 0 12px 0 14px; }
  .coll { margin-left: auto; }
  .log { flex: 1; margin: 0 5px 6px 6px; border-right: 1px solid #222; border-bottom: 1px solid #222; }
  .console .body { background: #333; }
  .console .con-tools { background: #474747; }
  .log p { margin: 7px 12px; font: 18px/20px "Liberation Mono", monospace; color: #1cb877; }

  .node-name { display: flex; align-items: center; gap: 4px; padding: 6px 22px 0 12px; }
  .node-name input:not([type]) { flex: 1; }
  .node-name button { margin-left: 11px; font: 13px/16px "Open Sans", sans-serif; color: #999; }
  .ins-scroll { flex: 1; min-height: 0; display: flex; margin: 12px 5px 13px 5px; gap: 5px; overflow: hidden; }
  .sections { flex: 1; min-width: 0; }
  .ins-bar { width: 3px; height: 513px; background: #808080; border-radius: 2px; }
  .sec-head { display: flex; align-items: center; height: 30px; border-bottom: 1px solid #666; gap: 4px; padding-left: 2px; }
  .sec-head label { display: flex; align-items: center; gap: 5px; }
  .sec-tools { margin-left: auto; display: flex; gap: 20px; padding-right: 8px; }
  .props { display: flex; flex-direction: column; gap: 8px; padding: 10px 0 21px 16px; }
  .props.sprite { gap: 7px; }
  .prop { display: grid; grid-template-columns: 143px minmax(0, 1fr); align-items: center; min-height: 26px; }
  .sprite .prop { min-height: 27px; }
  .name { white-space: nowrap; }
  .sub { padding-left: 16px; }
  .pair, .row { display: flex; gap: 12px; }
  .pair label { flex: 1; min-width: 0; display: flex; align-items: center; gap: 10px; }
  .pair input { flex: 1; }
  .row { gap: 4px; }
  .color { height: 26px; border: 1px solid #1a1a1a; border-radius: 3px; background: linear-gradient(#fff 18px, #1a1a1a 18px 19px, #fff 19px); }
  .drop { flex: 1; padding: 0 13px 0 13px; font-family: "Open Sans", sans-serif; }
  .node-sec .drop { height: 26px; }
  .blue { width: 71px; height: 26px; border: 1px solid #222; border-radius: 4px; background: #4281b6; color: #fff; font-weight: bold; font-size: 14px; }
  .tall { align-items: end; }
  .tall .name { line-height: 26px; }
  .asset { align-items: flex-end; }
  .slot { flex: 1; min-width: 0; }
  .tag { display: flex; width: fit-content; height: 11px; align-items: center; gap: 3px; padding: 1px 10px 0 7px; border-radius: 4px 4px 0 0; background: #262626; font: bold 11px/11px "Liberation Sans", sans-serif; }
  .tag :global(svg) { color: #4281b6; }
  .dot { width: 6px; height: 6px; margin-left: 3px; background: #009a00; }
  .ref { display: flex; height: 26px; border: 1px solid #1a1a1a; border-radius: 0 4px 4px 4px; background: #262626; font: bold 15px/23px "Open Sans", sans-serif; color: #262626; }
  .ref span { flex: 1; min-width: 0; padding-left: 5px; background: #4281b6; border-radius: 0 0 0 3px; }
  .ref button { width: 27px; color: #c04848; }
  .ref.none { padding-left: 5px; color: #5d5d5d; }
  .mats .name { display: flex; align-items: center; gap: 5px; margin-left: -15px; }
  .mats input { margin-right: 4px; }

  footer { display: flex; align-items: center; gap: 15px; height: 30px; padding: 0 12px 0 10px; background: #1a1a1a; color: #707070; flex: none; }
  .eye { color: #00f000; }
  .version { margin-left: auto; color: #fd942b; }
</style>
